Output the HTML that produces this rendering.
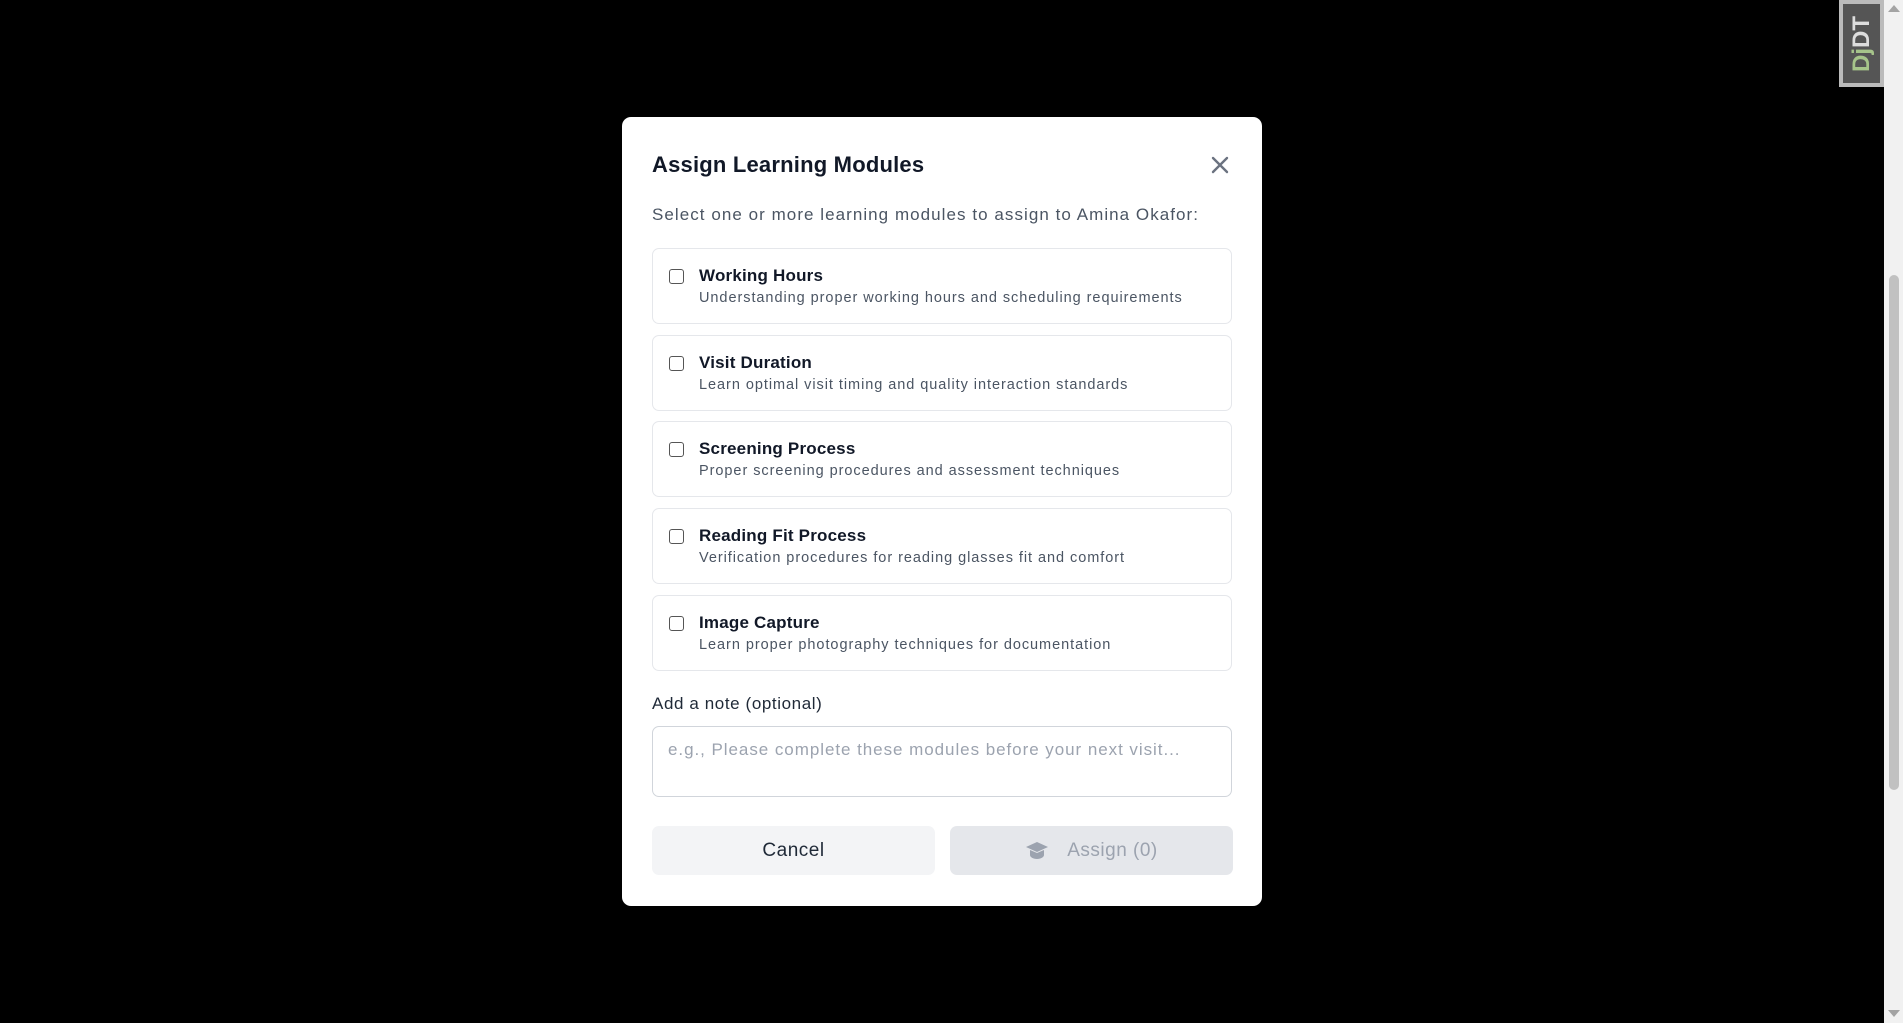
<!DOCTYPE html>
<html><head><style>
*{box-sizing:border-box;margin:0;padding:0}
body{width:1903px;height:1023px;background:#000;font-family:"Liberation Sans",sans-serif;position:relative;overflow:hidden}
.modal{position:absolute;left:622px;top:117px;width:640px;height:789px;background:#fff;border-radius:9px;padding:0 30px}
.title{position:absolute;left:30px;top:35px;font-size:22px;font-weight:bold;color:#111827;letter-spacing:0.2px}
.close{position:absolute;left:589px;top:39px}
.sub{position:absolute;left:30px;top:88px;font-size:17px;color:#4b5563;letter-spacing:1.05px}
.card{position:absolute;left:30px;width:580px;height:76px;border:1px solid #e5e7eb;border-radius:7px}
.cb{position:absolute;left:16px;top:20px;width:15px;height:15px;border:1.5px solid #555;border-radius:3px}
.ct{position:absolute;left:46px;top:17px;font-size:17px;font-weight:bold;color:#111827;letter-spacing:0.2px}
.cd{position:absolute;left:46px;top:41px;font-size:14.5px;color:#4b5563;letter-spacing:0.95px}
.lbl{position:absolute;left:30px;top:577px;font-size:17px;color:#1f2937;letter-spacing:0.6px}
.ta{position:absolute;left:30px;top:609px;width:580px;height:71px;border:1px solid #d1d5db;border-radius:7px;padding:13px 15px;font-size:17px;color:#9ca3af;letter-spacing:0.95px}
.btn{position:absolute;top:709px;height:49px;width:283px;border-radius:7px;display:flex;align-items:center;justify-content:center;font-size:19px;letter-spacing:0.5px}
.sb{position:absolute;left:1884px;top:0;width:19px;height:1023px;background:#f1f1f1}
</style></head><body>
<div class="modal">
<div class="title">Assign Learning Modules</div>
<svg class="close" width="18" height="18" viewBox="0 0 18 18"><path d="M2 2L16 16M16 2L2 16" stroke="#6b7280" stroke-width="2.4" stroke-linecap="round"/></svg>
<div class="sub">Select one or more learning modules to assign to Amina Okafor:</div>
<div class="card" style="top:131px"><div class="cb"></div><div class="ct">Working Hours</div><div class="cd">Understanding proper working hours and scheduling requirements</div></div>
<div class="card" style="top:218px"><div class="cb"></div><div class="ct">Visit Duration</div><div class="cd">Learn optimal visit timing and quality interaction standards</div></div>
<div class="card" style="top:304px"><div class="cb"></div><div class="ct">Screening Process</div><div class="cd">Proper screening procedures and assessment techniques</div></div>
<div class="card" style="top:391px"><div class="cb"></div><div class="ct">Reading Fit Process</div><div class="cd">Verification procedures for reading glasses fit and comfort</div></div>
<div class="card" style="top:478px"><div class="cb"></div><div class="ct">Image Capture</div><div class="cd">Learn proper photography techniques for documentation</div></div>
<div class="lbl">Add a note (optional)</div>
<div class="ta">e.g., Please complete these modules before your next visit...</div>
<div class="btn" style="left:30px;background:#f3f4f6;color:#1f2937">Cancel</div>
<div class="btn" style="left:328px;background:#e5e7eb;color:#9ca3af"><svg width="24" height="20" viewBox="0 0 24 20" style="margin-right:18px"><path d="M12 1L1 6l11 5 11-5z" fill="#9ca3af"/><path d="M5 9v5c0 2 3 4 7 4s7-2 7-4V9l-7 3z" fill="#9ca3af"/></svg>Assign (0)</div>
</div>
<div style="position:absolute;left:1839px;top:0;width:45px;height:87px;background:#bbb;padding:4px"><div style="width:100%;height:100%;background:#555;display:flex;align-items:center;justify-content:center"><span style="transform:rotate(-90deg);font-weight:bold;font-size:24px;color:#ddd;white-space:nowrap"><span style="color:#a6c48a">Dj</span>DT</span></div></div>
<div class="sb"><div style="position:absolute;left:5px;top:275px;width:10px;height:515px;background:#c1c1c1;border-radius:5px"></div>
<div style="position:absolute;left:4px;top:5px;border:6px solid transparent;border-bottom:7px solid #a3a3a3;border-top:0"></div>
<div style="position:absolute;left:4px;top:1010px;border:6px solid transparent;border-top:7px solid #a3a3a3;border-bottom:0"></div></div>
</body></html>
